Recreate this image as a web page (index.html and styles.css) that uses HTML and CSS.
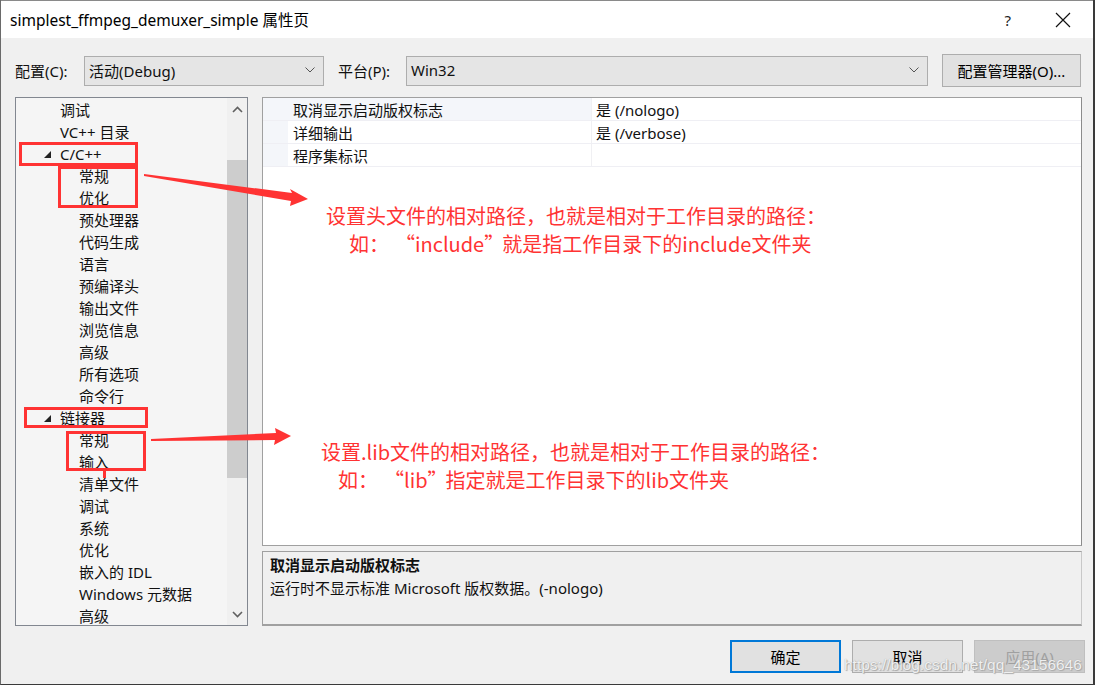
FILE: index.html
```html
<!DOCTYPE html>
<html lang="zh-CN">
<head>
<meta charset="utf-8">
<title>simplest_ffmpeg_demuxer_simple 属性页</title>
<link rel="stylesheet" href="styles.css">
</head>
<body>
<div class="window">
  <div class="titlebar">
    <span class="title">simplest_ffmpeg_demuxer_simple 属性页</span>
    <span class="help">?</span>
    <svg class="close" width="16" height="16" viewBox="0 0 16 16"><path d="M1 1 L15 15 M15 1 L1 15" stroke="#111" stroke-width="1.2" fill="none"/></svg>
  </div>
  <div class="content">
    <div class="toprow">
      <span class="lbl">配置(C):</span>
      <div class="combo combo-cfg"><span>活动(Debug)</span><svg width="10" height="6" viewBox="0 0 10 6"><path d="M0.5 0.5 L5 5 L9.5 0.5" stroke="#555" stroke-width="1" fill="none"/></svg></div>
      <span class="lbl lbl-plat">平台(P):</span>
      <div class="combo combo-plat"><span>Win32</span><svg width="10" height="6" viewBox="0 0 10 6"><path d="M0.5 0.5 L5 5 L9.5 0.5" stroke="#555" stroke-width="1" fill="none"/></svg></div>
      <button class="btn btn-mgr">配置管理器(O)...</button>
    </div>
    <div class="main">
      <div class="tree">
        <ul class="items">
          <li class="l1">调试</li>
          <li class="l1">VC++ 目录</li>
          <li class="l1 exp"><svg class="tri" width="8" height="8" viewBox="0 0 8 8"><path d="M7 0 L7 7 L0 7 Z" fill="#222"/></svg>C/C++</li>
          <li class="l2">常规</li>
          <li class="l2">优化</li>
          <li class="l2">预处理器</li>
          <li class="l2">代码生成</li>
          <li class="l2">语言</li>
          <li class="l2">预编译头</li>
          <li class="l2">输出文件</li>
          <li class="l2">浏览信息</li>
          <li class="l2">高级</li>
          <li class="l2">所有选项</li>
          <li class="l2">命令行</li>
          <li class="l1 exp"><svg class="tri" width="8" height="8" viewBox="0 0 8 8"><path d="M7 0 L7 7 L0 7 Z" fill="#222"/></svg>链接器</li>
          <li class="l2">常规</li>
          <li class="l2">输入</li>
          <li class="l2">清单文件</li>
          <li class="l2">调试</li>
          <li class="l2">系统</li>
          <li class="l2">优化</li>
          <li class="l2">嵌入的 IDL</li>
          <li class="l2">Windows 元数据</li>
          <li class="l2">高级</li>
        </ul>
        <div class="vscroll">
          <div class="sarrow"><svg width="11" height="7" viewBox="0 0 11 7"><path d="M1 6 L5.5 1.5 L10 6" stroke="#606060" stroke-width="1.6" fill="none"/></svg></div>
          <div class="strack"><div class="sthumb"></div></div>
          <div class="sarrow"><svg width="11" height="7" viewBox="0 0 11 7"><path d="M1 1 L5.5 5.5 L10 1" stroke="#606060" stroke-width="1.6" fill="none"/></svg></div>
        </div>
      </div>
      <div class="rightcol">
        <div class="grid">
          <div class="row sel"><div class="margin"></div><div class="name">取消显示启动版权标志</div><div class="val">是 (/nologo)</div></div>
          <div class="row"><div class="margin"></div><div class="name">详细输出</div><div class="val">是 (/verbose)</div></div>
          <div class="row"><div class="margin"></div><div class="name">程序集标识</div><div class="val"></div></div>
        </div>
        <div class="desc">
          <div class="desc-title">取消显示启动版权标志</div>
          <div class="desc-text">运行时不显示标准 Microsoft 版权数据。(-nologo)</div>
        </div>
      </div>
    </div>
    <div class="bottom">
      <button class="btn btn-ok">确定</button>
      <button class="btn">取消</button>
      <button class="btn btn-dis">应用(A)</button>
    </div>
  </div>

  <div class="watermark">https://blog.csdn.net/qq_43156646</div>

  <div class="box box1"></div>
  <div class="box box2"></div>
  <div class="box box3"></div>
  <div class="box box4"></div>
  <div class="stub"></div>

  <svg class="arrows" width="1095" height="685" viewBox="0 0 1095 685">
    <polygon points="143,174 291,193 289,189 307,199 289,206 290,201 143,176" fill="#f33"/>
    <polygon points="150,439 275,433 274,428 290,436 273,445 274,440 150,441" fill="#f33"/>
  </svg>

  <div class="note note1">
    <div>设置头文件的相对路径，也就是相对于工作目录的路径：</div>
    <div class="ind1">如：<span class="qo">“</span>include<span class="qc">”</span>就是指工作目录下的include文件夹</div>
  </div>
  <div class="note note2">
    <div>设置.lib文件的相对路径，也就是相对于工作目录的路径：</div>
    <div class="ind2">如：<span class="qo">“</span>lib<span class="qc">”</span>指定就是工作目录下的lib文件夹</div>
  </div>
</div>
</body>
</html>
```

FILE: styles.css
```css
* { box-sizing: border-box; }
html, body { margin: 0; padding: 0; }
body {
  width: 1095px;
  height: 685px;
  overflow: hidden;
  font-family: "Noto Sans", "Noto Sans CJK SC", sans-serif;
  font-size: 15px;
  color: #111;
  background: #f0f0f0;
}
.window {
  position: relative;
  width: 1095px;
  height: 685px;
  display: flex;
  flex-direction: column;
  border-left: 1px solid #6a6a6a;
  border-right: 2px solid #3a3a3a;
  border-bottom: 1px solid #3a3a3a;
  background: #f0f0f0;
}
.titlebar {
  height: 38px;
  flex: none;
  background: #fff;
  display: flex;
  align-items: center;
  padding-left: 9px;
  border-top: 1px solid #8a8a8a;
}
.title { font-size: 15.5px; color: #000; flex: 1; padding-bottom: 1px; }
.help { font-size: 15px; margin-right: 44px; color: #222; }
.close { margin-right: 22px; }

.content {
  flex: 1;
  display: flex;
  flex-direction: column;
  padding: 16px 0 0 14px;
}
.toprow {
  height: 33px;
  display: flex;
  align-items: center;
}
.lbl { font-size: 15px; width: 69px; padding-bottom: 1px; }
.lbl-plat { margin-left: 14px; width: 68px; }
.combo {
  height: 30px;
  background: #e5e5e5;
  border: 1px solid #adadad;
  display: flex;
  align-items: center;
  justify-content: space-between;
  padding: 0 8px 1px 4px;
  font-size: 15px;
}
.combo-cfg { width: 240px; }
.combo-plat { width: 522px; }
.btn {
  font-family: "Noto Sans", "Noto Sans CJK SC", sans-serif;
  font-size: 15px;
  color: #000;
  background: #e1e1e1;
  border: 1px solid #adadad;
  height: 33px;
  width: 111px;
  padding: 0 0 1px 0;
}
.btn-mgr { width: 139px; margin-left: 14px; }

.main {
  display: flex;
  margin-top: 10px;
  height: 529px;
}
.tree {
  width: 233px;
  height: 529px;
  background: #f5f5f5;
  border: 1px solid #828790;
  display: flex;
  overflow: hidden;
}
.items {
  list-style: none;
  margin: 0;
  padding: 1px 0 0 0;
  flex: 1;
  overflow: hidden;
}
.items li {
  height: 22px;
  line-height: 22px;
  font-size: 15px;
  white-space: nowrap;
  display: flex;
  align-items: center;
}
.l1 { padding-left: 44px; }
.l2 { padding-left: 63px; }
.exp { padding-left: 28px; }
.tri { margin-right: 8px; margin-top: 1px; }
.vscroll {
  width: 20px;
  display: flex;
  flex-direction: column;
  background: #f0f0f0;
}
.sarrow {
  height: 22px;
  display: flex;
  align-items: center;
  justify-content: center;
  flex: none;
}
.strack { flex: 1; padding-top: 40px; }
.sthumb { height: 318px; background: #cdcdcd; }

.rightcol {
  margin-left: 14px;
  width: 820px;
  display: flex;
  flex-direction: column;
}
.grid {
  height: 449px;
  background: #fff;
  border: 1px solid #a0a0a0;
  border-right-color: #8c8c8c;
}
.row {
  display: flex;
  height: 23px;
  border-bottom: 1px solid #efeff4;
}
.margin { width: 25px; background: #f4f6fa; }
.name {
  width: 304px;
  padding-left: 5px;
  padding-top: 1px;
  line-height: 22px;
  font-size: 15px;
  border-right: 1px solid #f0f0f3;
}
.sel .name { background: #f4f6fa; }
.val {
  flex: 1;
  padding-left: 4px;
  padding-top: 1px;
  line-height: 22px;
  font-size: 15px;
}
.desc {
  margin-top: 5px;
  height: 75px;
  border: 1px solid #a0a0a0;
  border-bottom: 2px solid #a0a0a0;
  border-right-color: #c8c8c8;
  padding: 2px 7px;
}
.desc-title { font-weight: bold; font-size: 15px; line-height: 22px; }
.desc-text { font-size: 15px; line-height: 24px; }

.bottom {
  display: flex;
  justify-content: flex-end;
  gap: 11px;
  padding-right: 8px;
  margin-top: 14px;
}
.btn-ok { border: 2px solid #0078d7; }
.btn-dis { background: #cccccc; border-color: #bfbfbf; color: #a0a0a0; }

.watermark {
  position: absolute;
  left: 843px;
  top: 656px;
  font-family: "Liberation Sans", Arial, sans-serif;
  font-size: 15.5px;
  color: rgba(255,255,255,0.85);
  text-shadow: 0 0 1px #999, 1px 1px 1px #aaa;
  white-space: nowrap;
}

.box { position: absolute; border: 3px solid #f33; }
.box1 { left: 18px; top: 142px; width: 119px; height: 24px; }
.box2 { left: 57px; top: 166px; width: 80px; height: 42px; }
.box3 { left: 23px; top: 407px; width: 124px; height: 21px; }
.box4 { left: 65px; top: 431px; width: 80px; height: 40px; }
.stub { position: absolute; left: 102px; top: 470px; width: 3px; height: 8px; background: #f33; }

.arrows { position: absolute; left: 0; top: 0; pointer-events: none; }

.note {
  position: absolute;
  color: #f33;
  font-family: "Noto Sans CJK SC", sans-serif;
  font-size: 20px;
  line-height: 28px;
  white-space: nowrap;
}
.note1 { left: 325px; top: 202px; }
.note2 { left: 320px; top: 438px; }
.ind1 { padding-left: 23px; }
.ind2 { padding-left: 17px; }
.qo { display: inline-block; width: 1.3em; text-align: right; }
.qc { display: inline-block; width: 0.9em; text-align: left; }
```
